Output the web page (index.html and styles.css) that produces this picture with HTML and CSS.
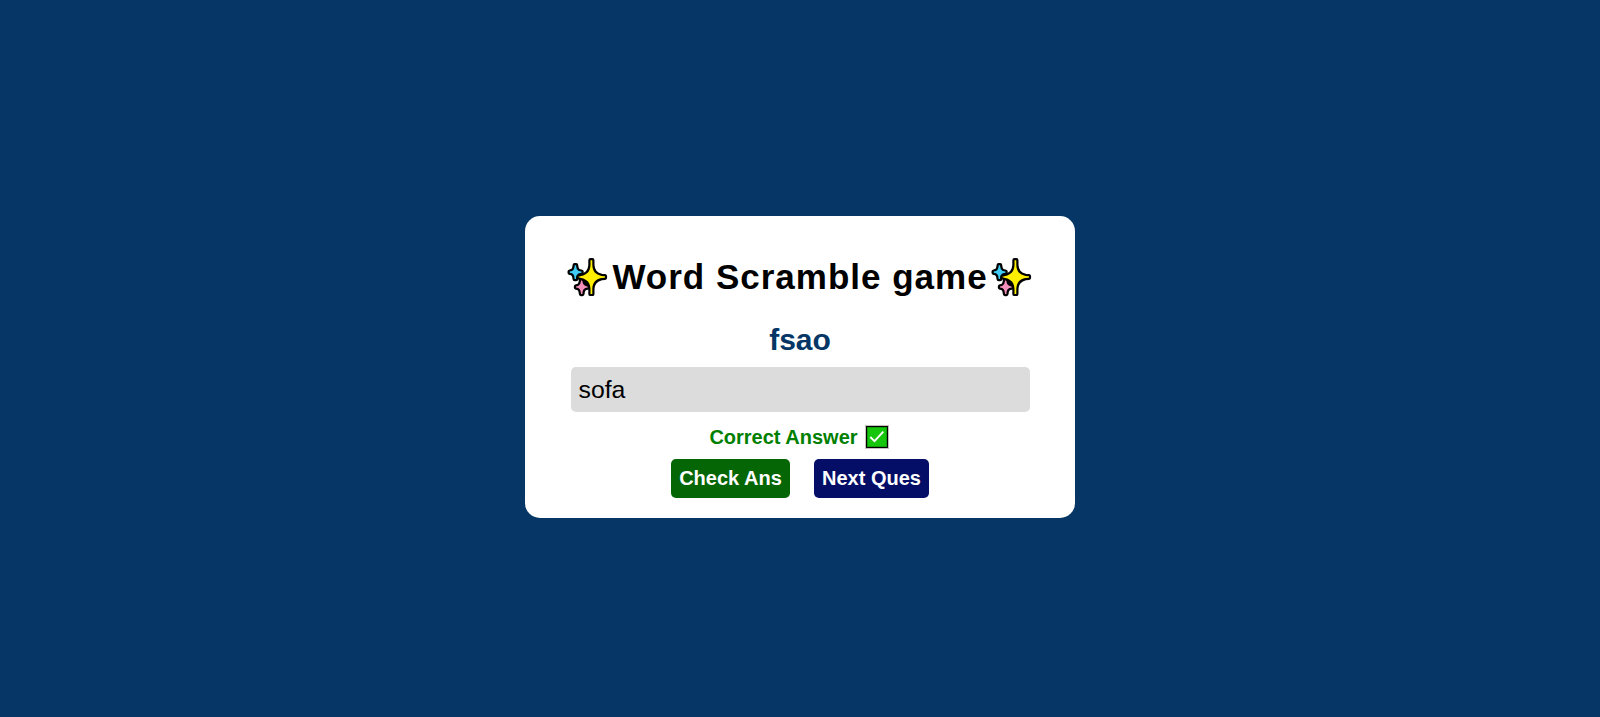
FILE: index.html
```html
<!DOCTYPE html>
<html lang="en">
<head>
<meta charset="utf-8">
<title>Word Scramble game</title>
<link rel="stylesheet" href="styles.css">
</head>
<body>
<svg class="defs" aria-hidden="true">
  <symbol id="sparkles" viewBox="0 -1 42 42">
    <g stroke="#000" stroke-width="4.4" stroke-linejoin="round" paint-order="stroke">
      <path fill="#3fcbf5" d="M7.700 8.300H9.100C9.300 12.300 10.400 14.200 14.500 14.600V15.800C10.400 16.200 9.300 18.100 9.100 22.100H7.700C7.500 18.100 6.400 16.200 2.700 15.800V14.600C6.400 14.200 7.500 12.300 7.700 8.300Z"/>
      <path fill="#f590bd" d="M14 23H15.400C15.600 27 16.700 29 20.800 29.400V30.600C16.700 31 15.600 33 15.400 37H14C13.800 33 12.700 31 9 30.600V29.400C12.700 29 13.800 27 14 23Z"/>
      <path fill="#000" stroke="none" d="M14 21L21 22.500L22.500 30Q18 29 14 21Z"/>
      <path fill="#ffee00" d="M23.500 3.300H25.300V8C25.600 14.500 28.500 17.600 34.500 18.900L37.900 19.300V20.700L34.500 21.100C28.500 22.400 25.600 25.500 25.300 32V36.900H23.500V32C23.200 25.500 20.300 22.400 14.300 21L11.500 20.300V19.700L14.300 19C20.300 17.600 23.200 14.500 23.500 8Z"/>
    </g>
  </symbol>
</svg>
<main class="card">
  <h1 class="title">
    <svg class="sparkle"><use href="#sparkles"/></svg>
    <span class="title-text">Word Scramble game</span>
    <svg class="sparkle"><use href="#sparkles"/></svg>
  </h1>
  <h2 class="scrambled">fsao</h2>
  <input class="guess" type="text" value="sofa" aria-label="Your answer">
  <p class="result">Correct Answer
    <svg class="tick" viewBox="0 0 24 24"><path fill="#c8bfc0" d="M0 0H24V24H0Z"/><path fill="#000" d="M1 1H23V23H1Z"/><path fill="#109c09" d="M2 2H22V22H2Z"/><path fill="#16c60c" d="M3 3H21V21H3Z"/><path fill="none" stroke="#fff" stroke-width="1.900" d="M5.300 12L9.500 16.100L18.300 6.700"/></svg>
  </p>
  <div class="actions">
    <button class="btn btn-check" type="button">Check Ans</button>
    <button class="btn btn-next" type="button">Next Ques</button>
  </div>
</main>
</body>
</html>
```
FILE: styles.css
```css
* {
  box-sizing: border-box;
  margin: 0;
  padding: 0;
}

body {
  min-height: 100vh;
  padding-top: 17px;
  display: flex;
  justify-content: center;
  align-items: center;
  background: #053665;
  font-family: Arial, "Liberation Sans", sans-serif;
}

.defs {
  display: none;
}

.card {
  width: 550px;
  height: 302px;
  padding: 40px 45px 20px 46px;
  display: flex;
  flex-direction: column;
  align-items: center;
  background: #fff;
  border-radius: 15px;
}

.title {
  display: flex;
  align-items: center;
  justify-content: center;
  height: 42px;
  margin-right: 1px;
  font-size: 35px;
  letter-spacing: 1px;
  white-space: nowrap;
}

.title-text {
  margin: 0 3px;
}

.sparkle {
  width: 42px;
  height: 42px;
  flex: none;
}

.scrambled {
  margin: 25px 1px 0 0;
  font-size: 30px;
  line-height: 34px;
  color: #053665;
}

.guess {
  width: 459px;
  height: 45px;
  margin-top: 10px;
  padding: 0 7.5px;
  border: 0;
  border-radius: 5px;
  outline: 0;
  background: #dcdcdc;
  color: #000;
  font: 24.8px Arial, "Liberation Sans", sans-serif;
}

.result {
  display: flex;
  align-items: center;
  gap: 7px;
  height: 24px;
  margin: 13px 3px 0 0;
  font-size: 20px;
  font-weight: bold;
  color: #008000;
}

.tick {
  width: 24px;
  height: 24px;
}

.actions {
  display: flex;
  gap: 24px;
  margin: 10px 1px 0 0;
}

.btn {
  height: 39px;
  border: 0;
  border-radius: 5px;
  color: #fff;
  font: bold 20px Arial, "Liberation Sans", sans-serif;
}

.btn-check {
  width: 119px;
  background: #046604;
}

.btn-next {
  width: 115px;
  background: #040e66;
}
```
